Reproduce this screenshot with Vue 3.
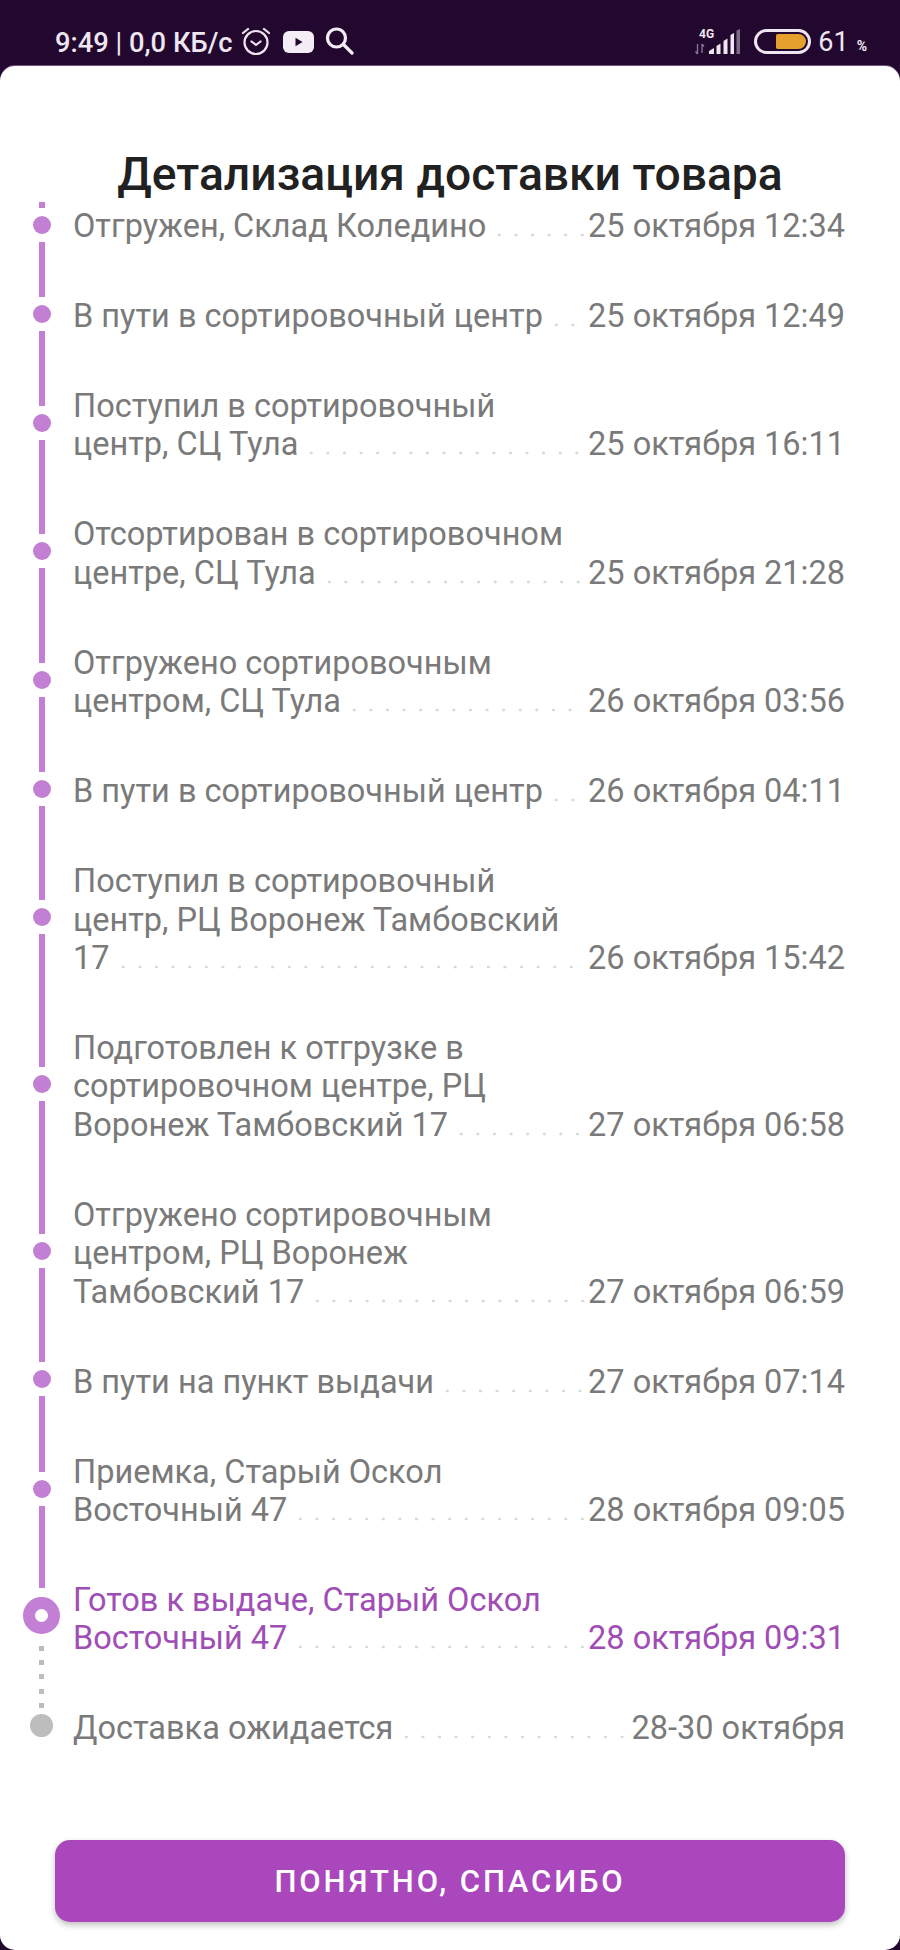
<script setup>
const steps = [
  { lines: ['Отгружен, Склад Коледино'], date: '25 октября 12:34' },
  { lines: ['В пути в сортировочный центр'], date: '25 октября 12:49' },
  { lines: ['Поступил в сортировочный', 'центр, СЦ Тула'], date: '25 октября 16:11' },
  { lines: ['Отсортирован в сортировочном', 'центре, СЦ Тула'], date: '25 октября 21:28' },
  { lines: ['Отгружено сортировочным', 'центром, СЦ Тула'], date: '26 октября 03:56' },
  { lines: ['В пути в сортировочный центр'], date: '26 октября 04:11' },
  { lines: ['Поступил в сортировочный', 'центр, РЦ Воронеж Тамбовский', '17'], date: '26 октября 15:42' },
  { lines: ['Подготовлен к отгрузке в', 'сортировочном центре, РЦ', 'Воронеж Тамбовский 17'], date: '27 октября 06:58' },
  { lines: ['Отгружено сортировочным', 'центром, РЦ Воронеж', 'Тамбовский 17'], date: '27 октября 06:59' },
  { lines: ['В пути на пункт выдачи'], date: '27 октября 07:14' },
  { lines: ['Приемка, Старый Оскол', 'Восточный 47'], date: '28 октября 09:05' },
  { lines: ['Готов к выдаче, Старый Оскол', 'Восточный 47'], date: '28 октября 09:31', state: 'current' },
  { lines: ['Доставка ожидается'], date: '28-30 октября', state: 'next' }
]
</script>

<template>
  <div class="screen">
    <div class="statusbar">
      <span class="clock">9:49 <i class="sep">|</i> 0,0 КБ/с</span>
      <svg class="ic-alarm" width="30" height="30" viewBox="0 0 30 30" fill="none" stroke="#efe6f2" stroke-width="2.2" stroke-linecap="round" stroke-linejoin="round">
        <circle cx="15" cy="16.5" r="11.5" />
        <path d="M10.5 15.5l4.5 3.5 4.5-3.5" />
        <path d="M2 7l5-4M28 7l-5-4" />
      </svg>
      <svg class="ic-yt" width="31" height="22" viewBox="0 0 31 22">
        <rect width="31" height="22" rx="6" fill="#f4edf5" />
        <path d="M12.5 6.8l7 4.2-7 4.2z" fill="#22082f" />
      </svg>
      <svg class="ic-search" width="29" height="30" viewBox="0 0 29 30" fill="none" stroke="#f4edf5" stroke-width="3.2" stroke-linecap="round">
        <circle cx="11.5" cy="12" r="9" />
        <path d="M18.5 18.5l8.5 8.5" />
      </svg>
      <div class="status-right">
        <svg class="ic-net" width="48" height="27" viewBox="0 0 48 27">
          <text x="5" y="10" class="net-label">4G</text>
          <path d="M3.5 16v10M3.5 26l-2-2.5M8 25V16M8 16l2 2.5" stroke="#8c7a95" stroke-width="1.3" fill="none" />
          <path d="M15 26v-3l5-3v6zM22.5 26v-8l4-2.5V26zM29.5 26V13l4-2.5V26z" fill="#efe6f2" />
          <path d="M36.5 26V7l3.5-2V26z" fill="#efe6f2" />
          <path d="M42.5 26V2.500l3.500-1.500V26z" fill="#7d6a87" />
        </svg>
        <div class="battery"><div class="battery-fill"></div></div>
        <span class="level">61</span>
        <span class="percent">%</span>
      </div>
    </div>

    <div class="sheet">
      <h1 class="title">Детализация доставки товара</h1>
      <div class="timeline">
        <div
          v-for="(step, i) in steps"
          :key="i"
          class="row"
          :class="[step.state, { first: i === 0 }]"
        >
          <div class="marker">
            <span class="seg top"></span>
            <span class="dot"></span>
            <span class="seg bottom"></span>
          </div>
          <div class="body">
            <div v-for="(line, j) in step.lines.slice(0, -1)" :key="j" class="line">{{ line }}</div>
            <div class="line last">
              <span>{{ step.lines[step.lines.length - 1] }}</span>
              <span class="leader"></span>
              <span class="date">{{ step.date }}</span>
            </div>
          </div>
        </div>
      </div>
      <button class="ok">ПОНЯТНО, СПАСИБО</button>
    </div>
  </div>
</template>

<style>
body {
  margin: 0;
}
</style>

<style scoped>
.screen {
  width: 900px;
  height: 1950px;
  background: #22082f;
  display: flex;
  flex-direction: column;
  font-family: Roboto, "Liberation Sans", sans-serif;
  overflow: hidden;
}

.statusbar {
  height: 66px;
  display: flex;
  align-items: center;
  padding: 0 33px 0 55px;
  color: #efe6f2;
  flex: none;
}
.clock {
  font-size: 27.3px;
  font-weight: 500;
  white-space: nowrap;
  margin-top: 19px;
}
.sep {
  font-style: normal;
  font-weight: 400;
}
.ic-alarm {
  margin: 16px 0 0 8px;
}
.ic-yt {
  margin: 17px 0 0 12px;
}
.ic-search {
  margin: 15px 0 0 11px;
}
.status-right {
  margin-left: auto;
  display: flex;
  align-items: center;
  margin-top: 17px;
}
.net-label {
  font-size: 12px;
  font-weight: 700;
  fill: #efe6f2;
}
.battery {
  width: 57px;
  height: 25px;
  margin-left: 12px;
  box-sizing: border-box;
  border: 3px solid #efe6f2;
  border-radius: 13px;
  padding: 2px;
  display: flex;
  justify-content: flex-end;
}
.battery-fill {
  width: 30px;
  background: #e5a02d;
  border-radius: 2px 9px 9px 2px;
}
.level {
  font-size: 27px;
  font-weight: 400;
  margin-left: 7px;
  line-height: 30px;
}
.percent {
  font-size: 14px;
  font-weight: 700;
  margin: 9px 0 0 8px;
}

.sheet {
  flex: 1;
  background: #fff;
  border-radius: 15px;
  box-shadow: 0 -1px 0 #6d5478;
  display: flex;
  flex-direction: column;
  padding: 84px 55px 28px 10px;
}
.title {
  margin: 0 0 4px 45px;
  width: 790px;
  text-align: center;
  font-size: 46.2px;
  line-height: 48px;
  font-weight: 500;
  color: #212121;
  white-space: nowrap;
}

.timeline {
  display: flex;
  flex-direction: column;
}
.row {
  display: flex;
  color: #7a7a7a;
  font-size: 32.5px;
  line-height: 38.4px;
}
.marker {
  width: 63px;
  flex: none;
  display: flex;
  flex-direction: column;
  align-items: center;
}
.seg {
  width: 6px;
  background: #c27fd3;
}
.seg.top {
  flex: 1 0 0;
  margin-bottom: 8px;
}
.seg.bottom {
  flex: 1 0 5px;
  margin-top: 8px;
}
.first .seg.top {
  flex: 0 0 6px;
}
.dot {
  width: 18px;
  height: 18px;
  border-radius: 50%;
  background: #c27fd3;
  flex: none;
}
.current {
  color: #a04db5;
}
.current .dot {
  width: 37px;
  height: 37px;
  box-sizing: border-box;
  border: 12px solid #c27fd3;
  background: #fff;
}
.current .seg.top {
  margin-bottom: 9px;
}
.current .seg.bottom {
  margin-top: 12px;
  width: 5px;
  background: linear-gradient(#bdbdbd 5px, transparent 5px) 0 0 / 100% 14px repeat-y;
}
.next .seg.top {
  width: 5px;
  margin-bottom: 6px;
  background: linear-gradient(transparent 9px, #bdbdbd 9px) 0 100% / 100% 14px repeat-y;
}
.next .seg.bottom {
  background: none;
}
.next .dot {
  width: 23px;
  height: 23px;
  background: #bdbdbd;
}

.body {
  flex: 1;
  min-width: 0;
  padding: 25.8px 0;
}
.first .body {
  padding-top: 5px;
}
.line {
  white-space: nowrap;
}
.line.last {
  display: flex;
}
.leader {
  flex: 1;
  height: 4px;
  margin: 26px 3px 0 5px;
  background: radial-gradient(circle, #d9d9d9 1.3px, transparent 1.7px) 0 0 / 16.6px 4px repeat-x;
}
.date {
  flex: none;
}

.ok {
  margin: auto 0 0 45px;
  height: 82px;
  border: none;
  border-radius: 15px;
  background: #ab47bc;
  color: #fff;
  font-family: inherit;
  font-size: 31px;
  font-weight: 500;
  letter-spacing: 2.9px;
  box-shadow: 0 3px 6px rgba(0, 0, 0, 0.25);
}
</style>
